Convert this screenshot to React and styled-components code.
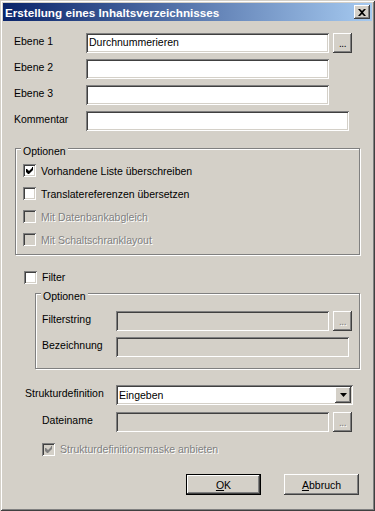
import React from 'react';
import styled, { createGlobalStyle } from 'styled-components';

const GlobalStyle = createGlobalStyle`
  html, body {
    margin: 0;
    padding: 0;
    background: #d4d0c8;
  }
  body {
    font-family: "Liberation Sans", Arial, sans-serif;
  }
`;

const sunken = `
  box-shadow: inset 1px 1px #808080, inset -1px -1px #ffffff,
    inset 2px 2px #404040, inset -2px -2px #d4d0c8;
`;

const raised = `
  box-shadow: inset -1px -1px #404040, inset 1px 1px #ffffff,
    inset -2px -2px #808080, inset 2px 2px #d4d0c8;
`;

const Window = styled.div`
  width: 375px;
  height: 511px;
  box-sizing: border-box;
  padding: 3px;
  background: #d4d0c8;
  box-shadow: inset 1px 1px #d4d0c8, inset -1px -1px #404040,
    inset 2px 2px #ffffff, inset -2px -2px #808080;
  font-family: "Liberation Sans", Arial, sans-serif;
  font-size: 10.5px;
  color: #000;
  display: flex;
  flex-direction: column;
`;

const TitleBar = styled.div`
  height: 18px;
  flex-shrink: 0;
  display: flex;
  align-items: center;
  justify-content: space-between;
  padding: 0 2px 0 2px;
  background: linear-gradient(90deg, #0a246a 0%, #a6caf0 100%);
`;

const Title = styled.span`
  color: #fff;
  font-weight: bold;
  font-size: 11.7px;
  white-space: nowrap;
`;

const CloseButton = styled.div`
  width: 16px;
  height: 14px;
  background: #d4d0c8;
  ${raised}
  display: flex;
  align-items: center;
  justify-content: center;
`;

const Content = styled.div`
  display: flex;
  flex-direction: column;
  align-items: flex-start;
`;

const Row = styled.div`
  display: flex;
  align-items: flex-start;
  margin-top: ${p => p.$mt || 0}px;
  padding-left: ${p => p.$indent || 0}px;
`;

const Label = styled.span`
  width: ${p => p.$w}px;
  flex-shrink: 0;
  line-height: 16px;
  white-space: nowrap;
`;

const TextBox = styled.div`
  width: ${p => p.$w}px;
  height: 20px;
  box-sizing: border-box;
  padding: 0 3px 2px;
  display: flex;
  align-items: center;
  background: ${p => (p.$disabled ? '#d4d0c8' : '#ffffff')};
  ${sunken}
  white-space: nowrap;
`;

const DotsButton = styled.div`
  width: 19px;
  height: 20px;
  box-sizing: border-box;
  margin-left: 4px;
  background: #d4d0c8;
  ${raised}
  display: flex;
  align-items: flex-end;
  justify-content: center;
  padding-bottom: 5px;
  line-height: 8px;
  font-size: 10px;
  letter-spacing: -0.5px;
  color: ${p => (p.$disabled ? '#808080' : '#000')};
  text-shadow: ${p => (p.$disabled ? '1px 1px #fff' : 'none')};
`;

const Group = styled.div`
  position: relative;
  box-sizing: border-box;
  margin-top: ${p => p.$mt}px;
  margin-left: ${p => p.$ml}px;
  width: ${p => p.$w}px;
  height: ${p => p.$h}px;
  padding: ${p => p.$pt}px 0 0 ${p => p.$pl}px;
  border: 1px solid #808080;
  box-shadow: inset 1px 1px #ffffff, 1px 1px #ffffff;
  display: flex;
  flex-direction: column;
  align-items: flex-start;
`;

const Legend = styled.span`
  position: absolute;
  top: -4px;
  left: 5px;
  padding: 0 2px;
  line-height: 13px;
  background: #d4d0c8;
`;

const CheckRow = styled.div`
  display: flex;
  align-items: center;
  gap: 5px;
  height: ${p => p.$h || 23}px;
  margin-top: ${p => p.$mt || 0}px;
  padding-left: ${p => p.$indent || 0}px;
  white-space: nowrap;
  color: ${p => (p.$disabled ? '#808080' : '#000')};
  text-shadow: ${p => (p.$disabled ? '1px 1px #ffffff' : 'none')};
`;

const Box = styled.span`
  width: 13px;
  height: 13px;
  flex-shrink: 0;
  box-sizing: border-box;
  background: ${p => (p.$disabled ? '#d4d0c8' : '#ffffff')};
  ${sunken}
  display: flex;
  align-items: center;
  justify-content: center;
`;

const Combo = styled.div`
  width: ${p => p.$w}px;
  height: 20px;
  box-sizing: border-box;
  padding: 2px 2px 2px 3px;
  background: #fff;
  ${sunken}
  display: flex;
  align-items: center;
  justify-content: space-between;
`;

const ComboText = styled.span`
  padding-bottom: 1px;
`;

const DropButton = styled.div`
  width: 16px;
  height: 16px;
  box-sizing: border-box;
  background: #d4d0c8;
  ${raised}
  display: flex;
  align-items: center;
  justify-content: center;
`;

const ButtonRow = styled.div`
  align-self: stretch;
  display: flex;
  justify-content: flex-end;
  gap: 23px;
  margin-top: ${p => p.$mt}px;
  padding-right: 13px;
`;

const PushButton = styled.div`
  width: 75px;
  height: 21px;
  box-sizing: border-box;
  background: #d4d0c8;
  display: flex;
  align-items: center;
  justify-content: center;
  ${p =>
    p.$default
      ? `box-shadow: inset 0 0 0 1px #000, inset -2px -2px #404040, inset 2px 2px #ffffff,
    inset -3px -3px #808080;`
      : raised}
  u {
    text-decoration: underline;
    text-underline-offset: 1px;
  }
`;

const Check = ({ color = '#000' }) => (
  <svg width="7" height="7" viewBox="0 0 7 7">
    <path d="M0 2h1l2 2 3-3V0h1v3L3 7H2L0 5z" fill={color} />
  </svg>
);

const CheckBox = ({ checked, disabled, children, ...rest }) => (
  <CheckRow $disabled={disabled} {...rest}>
    <Box $disabled={disabled}>{checked && <Check color={disabled ? '#808080' : '#000'} />}</Box>
    <span>{children}</span>
  </CheckRow>
);

export default function App() {
  return (
    <>
      <GlobalStyle />
      <Window>
        <TitleBar>
          <Title>Erstellung eines Inhaltsverzeichnisses</Title>
          <CloseButton>
            <svg width="8" height="7" viewBox="0 0 8 7">
              <path d="M0 0h2l2 2 2-2h2L5 3.5 8 7H6L4 5 2 7H0l3-3.5z" fill="#000" />
            </svg>
          </CloseButton>
        </TitleBar>

        <Content>
          <Row $mt={12} $indent={11}>
            <Label $w={72}>Ebene 1</Label>
            <TextBox $w={243}>Durchnummerieren</TextBox>
            <DotsButton>...</DotsButton>
          </Row>
          <Row $mt={6} $indent={11}>
            <Label $w={72}>Ebene 2</Label>
            <TextBox $w={243} />
          </Row>
          <Row $mt={6} $indent={11}>
            <Label $w={72}>Ebene 3</Label>
            <TextBox $w={243} />
          </Row>
          <Row $mt={6} $indent={11}>
            <Label $w={72}>Kommentar</Label>
            <TextBox $w={263} />
          </Row>

          <Group $mt={17} $ml={12} $w={345} $h={107} $pt={10} $pl={7}>
            <Legend>Optionen</Legend>
            <CheckBox checked>Vorhandene Liste überschreiben</CheckBox>
            <CheckBox>Translatereferenzen übersetzen</CheckBox>
            <CheckBox disabled>Mit Datenbankabgleich</CheckBox>
            <CheckBox disabled>Mit Schaltschranklayout</CheckBox>
          </Group>

          <CheckBox $h={16} $mt={14} $indent={21}>Filter</CheckBox>

          <Group $mt={8} $ml={32} $w={325} $h={76} $pt={17} $pl={6}>
            <Legend>Optionen</Legend>
            <Row>
              <Label $w={74}>Filterstring</Label>
              <TextBox $w={213} $disabled />
              <DotsButton $disabled>...</DotsButton>
            </Row>
            <Row $mt={6}>
              <Label $w={74}>Bezeichnung</Label>
              <TextBox $w={233} $disabled />
            </Row>
          </Group>

          <Row $mt={16} $indent={22}>
            <Label $w={91}>Strukturdefinition</Label>
            <Combo $w={237}>
              <ComboText>Eingeben</ComboText>
              <DropButton>
                <svg width="7" height="4" viewBox="0 0 7 4">
                  <path d="M0 0h7L3.5 4z" fill="#000" />
                </svg>
              </DropButton>
            </Combo>
          </Row>
          <Row $mt={7} $indent={39}>
            <Label $w={74}>Dateiname</Label>
            <TextBox $w={213} $disabled />
            <DotsButton $disabled>...</DotsButton>
          </Row>

          <CheckBox checked disabled $h={16} $mt={9} $indent={39}>
            Strukturdefinitionsmaske anbieten
          </CheckBox>

          <ButtonRow $mt={17}>
            <PushButton $default>
              <span><u>O</u>K</span>
            </PushButton>
            <PushButton>
              <span><u>A</u>bbruch</span>
            </PushButton>
          </ButtonRow>
        </Content>
      </Window>
    </>
  );
}
